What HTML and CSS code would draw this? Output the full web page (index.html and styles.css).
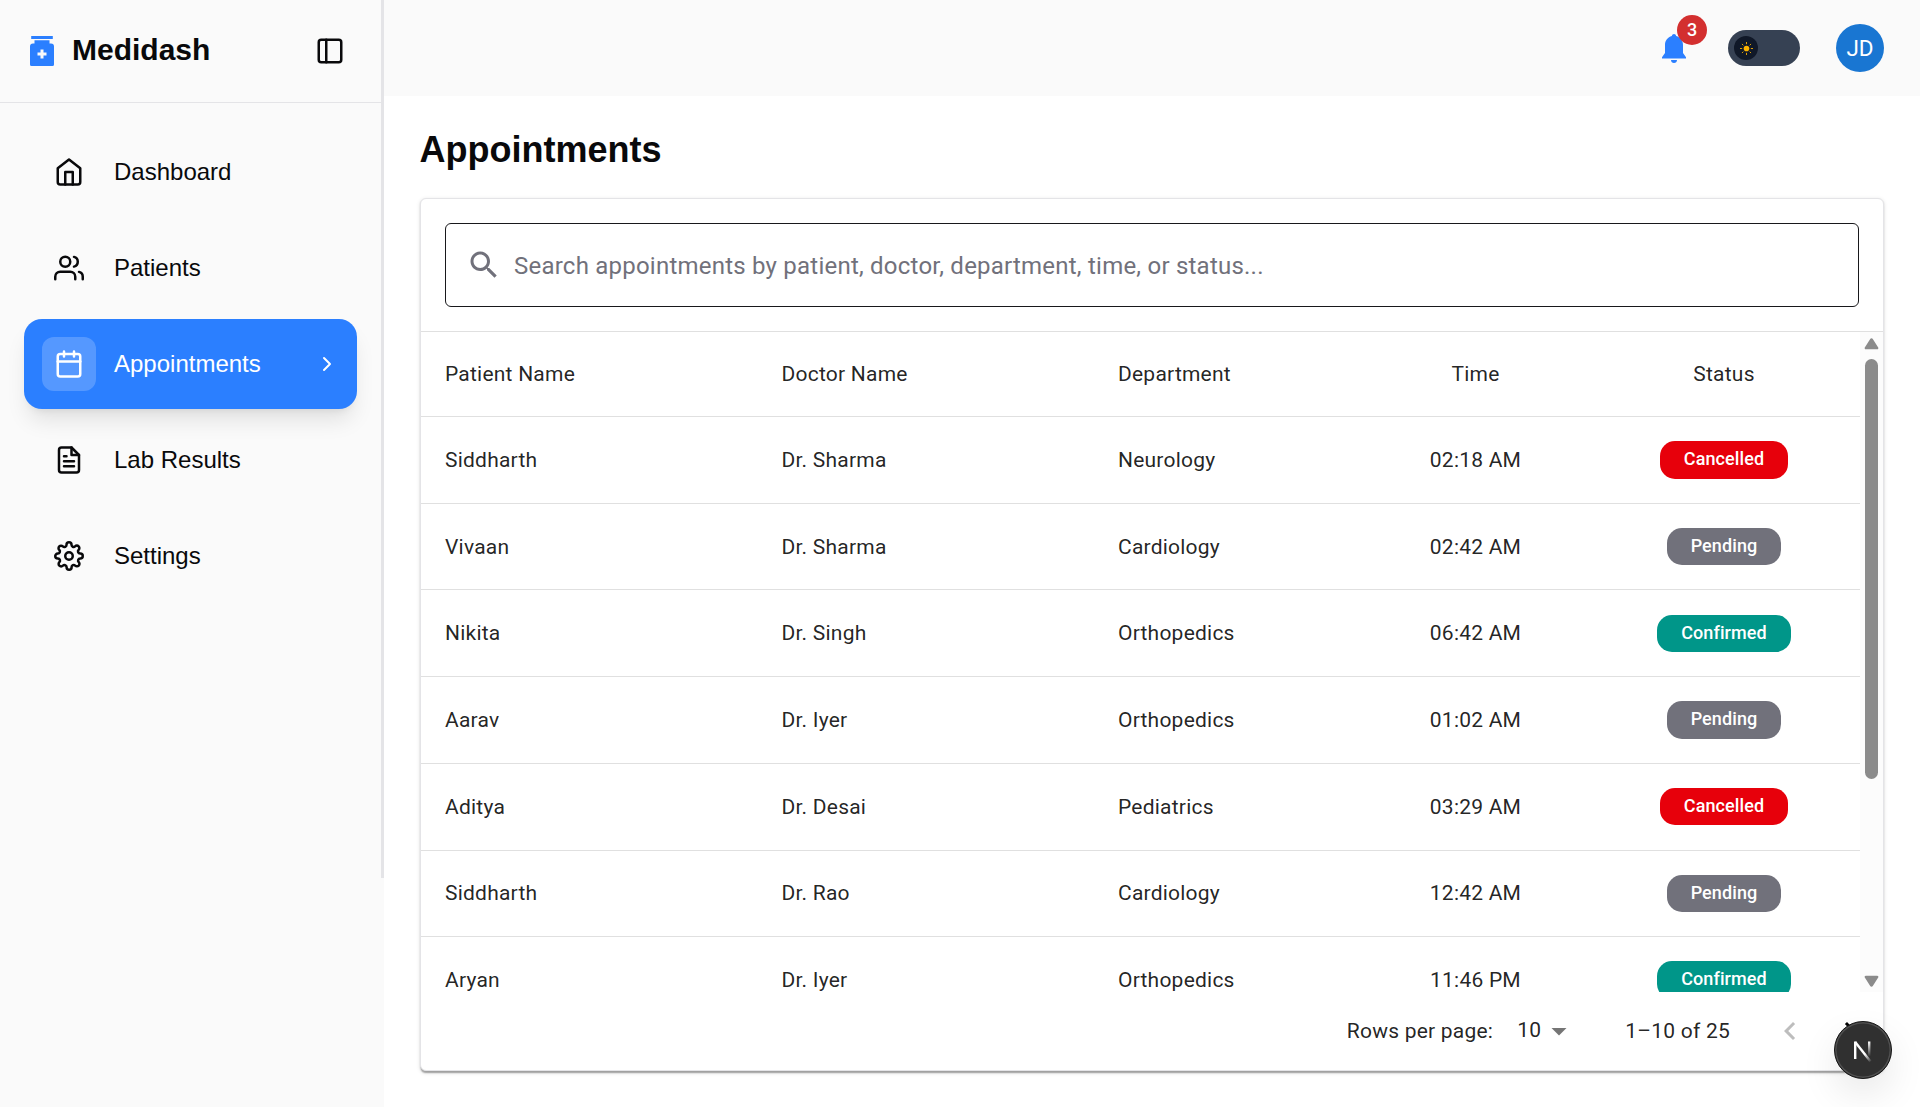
FILE: index.html
```html
<!DOCTYPE html>
<html lang="en">
<head>
<meta charset="utf-8">
<title>Medidash</title>
<link rel="stylesheet" href="styles.css">
</head>
<body>
<div class="app">
  <div class="side-rail">
    <aside class="sidebar">
      <div class="brand">
        <svg class="brand-icon" viewBox="0 0 24 30"><path fill="#2b7fff" d="M1.200 0h21.600v3H1.200zM4.500 4.200h15v3.300H21a3 3 0 0 1 3 3V28.500a1.500 1.500 0 0 1-1.500 1.500h-21A1.500 1.500 0 0 1 0 28.500V10.500a3 3 0 0 1 3-3h1.500z"/><path fill="#fafafa" d="M10.500 13.500h3v3h3v3h-3v3h-3v-3h-3v-3h3z"/></svg>
        <span class="brand-name">Medidash</span>
        <svg class="line-icon" viewBox="0 0 24 24"><rect width="18" height="18" x="3" y="3" rx="2"/><path d="M9 3v18"/></svg>
      </div>
      <nav class="nav">
        <a class="nav-item"><span class="nav-icon"><svg class="line-icon" viewBox="0 0 24 24"><path d="M3 9l9-7 9 7v11a2 2 0 0 1-2 2H5a2 2 0 0 1-2-2z"/><path d="M9 22V12h6v10"/></svg></span>Dashboard</a>
        <a class="nav-item"><span class="nav-icon"><svg class="line-icon" viewBox="0 0 24 24"><path d="M17 21v-2a4 4 0 0 0-4-4H5a4 4 0 0 0-4 4v2"/><circle cx="9" cy="7" r="4"/><path d="M23 21v-2a4 4 0 0 0-3-3.870"/><path d="M16 3.130a4 4 0 0 1 0 7.750"/></svg></span>Patients</a>
        <a class="nav-item active"><span class="nav-icon"><svg class="line-icon" viewBox="0 0 24 24"><path d="M8 2v4M16 2v4"/><rect width="18" height="18" x="3" y="4" rx="2"/><path d="M3 10h18"/></svg></span>Appointments<svg class="line-icon chevron" viewBox="0 0 24 24"><path d="m9 18 6-6-6-6"/></svg></a>
        <a class="nav-item"><span class="nav-icon"><svg class="line-icon" viewBox="0 0 24 24"><path d="M14 2H6a2 2 0 0 0-2 2v16a2 2 0 0 0 2 2h12a2 2 0 0 0 2-2V8z"/><path d="M14 2v6h6M16 13H8M16 17H8M10 9H8"/></svg></span>Lab Results</a>
        <a class="nav-item"><span class="nav-icon"><svg class="line-icon" viewBox="0 0 24 24"><circle cx="12" cy="12" r="3"/><path d="M19.400 15a1.650 1.650 0 0 0 .33 1.820l.06.06a2 2 0 0 1 0 2.830 2 2 0 0 1-2.830 0l-.06-.06a1.650 1.650 0 0 0-1.820-.33 1.650 1.650 0 0 0-1 1.510V21a2 2 0 0 1-2 2 2 2 0 0 1-2-2v-.09A1.650 1.650 0 0 0 9 19.400a1.650 1.650 0 0 0-1.820.33l-.06.06a2 2 0 0 1-2.830 0 2 2 0 0 1 0-2.830l.06-.06a1.650 1.650 0 0 0 .33-1.820 1.650 1.650 0 0 0-1.510-1H3a2 2 0 0 1-2-2 2 2 0 0 1 2-2h.09A1.650 1.650 0 0 0 4.600 9a1.650 1.650 0 0 0-.33-1.820l-.06-.06a2 2 0 0 1 0-2.830 2 2 0 0 1 2.830 0l.06.06a1.650 1.650 0 0 0 1.820.33H9a1.650 1.650 0 0 0 1-1.510V3a2 2 0 0 1 2-2 2 2 0 0 1 2 2v.09a1.650 1.650 0 0 0 1 1.510 1.650 1.650 0 0 0 1.820-.33l.06-.06a2 2 0 0 1 2.830 0 2 2 0 0 1 0 2.830l-.06.06a1.650 1.650 0 0 0-.33 1.820V9a1.650 1.650 0 0 0 1.510 1H21a2 2 0 0 1 2 2 2 2 0 0 1-2 2h-.09a1.650 1.650 0 0 0-1.510 1z"/></svg></span>Settings</a>
      </nav>
    </aside>
  </div>
  <div class="content">
    <header class="topbar">
      <div class="bell">
        <svg viewBox="0 0 24 29"><path fill="#2b7fff" d="M12 0c1.100 0 2 .8 2.200 1.900C18.200 3 21 6.500 21 10.700V19l3 4.200v1.300H0v-1.300L3 19v-8.300C3 6.500 5.800 3 9.800 1.900 10 .8 10.900 0 12 0zM9 26h6c0 1.700-1.300 3-3 3s-3-1.300-3-3z"/></svg>
        <span class="badge">3</span>
      </div>
      <div class="toggle"><span class="knob"><svg viewBox="0 0 12 12"><circle cx="6" cy="6" r="2.600" fill="#fdb400"/><path stroke="#fdb400" stroke-width=".8" d="M6 0v2M6 10v2M0 6h2M10 6h2M1.800 1.800l1.300 1.300M8.900 8.900l1.300 1.300M1.800 10.200l1.300-1.300M8.900 3.100l1.300-1.300"/></svg></span></div>
      <div class="avatar">JD</div>
    </header>
    <main class="main">
      <h1 class="title">Appointments</h1>
      <section class="card">
        <div class="search-wrap">
          <div class="search"><svg viewBox="0 0 24 24"><path d="M15.500 14h-.79l-.28-.27C15.410 12.590 16 11.110 16 9.500 16 5.910 13.090 3 9.500 3S3 5.910 3 9.500 5.910 16 9.500 16c1.610 0 3.090-.59 4.230-1.570l.27.28v.79l5 4.990L20.490 19zm-6 0C7.010 14 5 11.990 5 9.500S7.010 5 9.500 5 14 7.010 14 9.500 11.990 14 9.500 14"/></svg><span>Search appointments by patient, doctor, department, time, or status...</span></div>
        </div>
        <div class="table-area">
          <div class="table">
            <div class="row head"><span>Patient Name</span><span>Doctor Name</span><span>Department</span><span class="mid">Time</span><span class="mid">Status</span></div>
            <div class="row"><span>Siddharth</span><span>Dr. Sharma</span><span>Neurology</span><span class="mid">02:18 AM</span><span class="mid"><b class="pill cancelled">Cancelled</b></span></div>
            <div class="row"><span>Vivaan</span><span>Dr. Sharma</span><span>Cardiology</span><span class="mid">02:42 AM</span><span class="mid"><b class="pill pending">Pending</b></span></div>
            <div class="row"><span>Nikita</span><span>Dr. Singh</span><span>Orthopedics</span><span class="mid">06:42 AM</span><span class="mid"><b class="pill confirmed">Confirmed</b></span></div>
            <div class="row"><span>Aarav</span><span>Dr. Iyer</span><span>Orthopedics</span><span class="mid">01:02 AM</span><span class="mid"><b class="pill pending">Pending</b></span></div>
            <div class="row"><span>Aditya</span><span>Dr. Desai</span><span>Pediatrics</span><span class="mid">03:29 AM</span><span class="mid"><b class="pill cancelled">Cancelled</b></span></div>
            <div class="row"><span>Siddharth</span><span>Dr. Rao</span><span>Cardiology</span><span class="mid">12:42 AM</span><span class="mid"><b class="pill pending">Pending</b></span></div>
            <div class="row"><span>Aryan</span><span>Dr. Iyer</span><span>Orthopedics</span><span class="mid">11:46 PM</span><span class="mid"><b class="pill confirmed">Confirmed</b></span></div>
          </div>
          <div class="scrollbar">
            <svg viewBox="0 0 15 12"><path d="M6.200 1.100a1.500 1.500 0 0 1 2.600 0l5.400 8.400a1.200 1.200 0 0 1-1 1.800H1.800a1.200 1.200 0 0 1-1-1.800z"/></svg>
            <div class="thumb"></div>
            <svg class="down" viewBox="0 0 15 12"><path d="M6.200 1.100a1.500 1.500 0 0 1 2.600 0l5.400 8.400a1.200 1.200 0 0 1-1 1.800H1.800a1.200 1.200 0 0 1-1-1.800z"/></svg>
          </div>
        </div>
        <footer class="pager">
          <span class="rows-label">Rows per page:</span>
          <span class="rows-value">10</span>
          <svg class="caret" viewBox="0 0 24 24"><path d="m7 10 5 5 5-5z"/></svg>
          <span class="range">1–10 of 25</span>
          <svg class="prev" viewBox="0 0 24 24"><path d="M15.410 16.590 10.830 12l4.580-4.590L14 6l-6 6 6 6z"/></svg>
          <svg class="next" viewBox="0 0 24 24"><path d="M8.590 16.590 13.170 12 8.590 7.410 10 6l6 6-6 6z"/></svg>
        </footer>
      </section>
    </main>
  </div>
  <div class="dev-button">
    <svg viewBox="0 0 40 40"><defs><linearGradient id="stem" x1="0" y1="0" x2="0" y2="1"><stop offset="0" stop-color="#fff"/><stop offset="1" stop-color="#fff" stop-opacity="0"/></linearGradient><linearGradient id="slash" gradientUnits="userSpaceOnUse" x1="22" y1="24" x2="28" y2="32"><stop offset="0" stop-color="#fff"/><stop offset="1" stop-color="#fff" stop-opacity="0"/></linearGradient></defs><path fill="#fff" d="M11 11.500h2.400v17.500H11z"/><path fill="none" stroke="url(#slash)" stroke-width="2.400" d="M12.200 12 27.500 31.500"/><rect x="25" y="11.500" width="2.400" height="15" fill="url(#stem)"/></svg>
  </div>
</div>
</body>
</html>
```
FILE: styles.css
```css
* { box-sizing: border-box; }
body { margin: 0; background: #fff; color: #09090b; font-family: "Liberation Sans", Arial, sans-serif; }
svg { display: block; flex: none; }
.app { display: flex; height: 1107px; overflow: hidden; }
.side-rail { width: 384px; flex: none; background: #fafafa; }
.sidebar { height: 878px; border-right: 3px solid #e4e4e7; }
.brand { display: flex; align-items: center; height: 103px; padding: 0 36px 0 30px; border-bottom: 1px solid #e4e4e7; }
.brand-icon { width: 24px; height: 30px; }
.brand-name { flex: 1; margin: 0 0 2px 18px; font-size: 30px; font-weight: 700; line-height: 42px; }
.line-icon { width: 30px; height: 30px; fill: none; stroke: currentColor; stroke-width: 2; stroke-linecap: round; stroke-linejoin: round; }
.nav { display: flex; flex-direction: column; gap: 6px; padding: 24px; }
.nav-item { display: flex; align-items: center; height: 90px; padding: 0 18px; border-radius: 18px; font-size: 24px; }
.nav-icon { display: flex; align-items: center; justify-content: center; width: 54px; height: 54px; margin-right: 18px; border-radius: 12px; }
.active { background: #2b7fff; color: #fff; box-shadow: 0 15px 22px -4px rgba(0, 0, 0, .1), 0 6px 9px -6px rgba(0, 0, 0, .1); }
.active .nav-icon { background: rgba(255, 255, 255, .2); }
.chevron { width: 24px; height: 24px; margin-left: auto; }

.content { flex: 1; font-family: Roboto, sans-serif; }
.topbar { display: flex; align-items: center; justify-content: flex-end; height: 96px; padding-right: 36px; background: #fafafa; }
.bell { position: relative; width: 24px; height: 29px; margin-right: 42px; }
.badge { position: absolute; left: 15px; top: -19px; width: 30px; height: 30px; border-radius: 50%; background: #d32f2f; color: #fff; font-size: 18px; font-weight: 500; line-height: 30px; text-align: center; }
.toggle { display: flex; align-items: center; width: 72px; height: 36px; padding: 6px; margin-right: 36px; border-radius: 18px; background: #364153; }
.knob { display: flex; align-items: center; justify-content: center; width: 24px; height: 24px; border-radius: 50%; background: #101828; }
.knob svg { width: 13px; height: 13px; }
.avatar { width: 48px; height: 48px; border-radius: 50%; background: #1976d2; color: #fff; font-size: 22.5px; line-height: 49px; text-align: center; }

.main { padding: 30px 36px 0; }
.title { margin: 0 0 24px -.5px; font: 700 36px/48px "Liberation Sans", Arial, sans-serif; }
.card { height: 873px; border: 1px solid #e4e4e7; border-radius: 6px; background: #fff; box-shadow: 0 3px 1.5px -1.5px rgba(0, 0, 0, .2), 0 1.5px 1.5px rgba(0, 0, 0, .14), 0 1.5px 4.5px rgba(0, 0, 0, .12); color: rgba(0, 0, 0, .87); }
.search-wrap { height: 133px; padding: 24px; border-bottom: 1px solid #e0e0e0; }
.search { display: flex; align-items: center; height: 84px; padding: 0 20px; border: 1px solid #18181b; border-radius: 6px; color: #71717b; font-size: 24px; letter-spacing: .225px; }
.search svg { width: 36px; height: 36px; margin-right: 12px; fill: #71717b; }
.search span { padding-top: 2px; }
.table-area { display: flex; height: 660px; }
.table { flex: 1; overflow: hidden; font-size: 21px; letter-spacing: .225px; }
.row { display: grid; grid-template-columns: 336.5px 336.5px 269px 225px 272px; align-items: center; height: 86.72px; border-bottom: 1px solid #e0e0e0; }
.row > span { padding: 0 24px; }
.row > .mid { padding: 0; text-align: center; }
.head { height: 85px; }
.pill { display: inline-block; height: 37.5px; padding: 0 24px; border-radius: 15px; color: #fff; font-size: 18px; font-weight: 500; line-height: 36px; letter-spacing: .1px; vertical-align: middle; }
.cancelled { background: #e7000b; }
.pending { background: #71717b; }
.confirmed { background: #009689; }
.scrollbar { display: flex; flex-direction: column; align-items: center; width: 23px; padding: 6px 0 5px; background: #fcfcfc; }
.scrollbar svg { width: 15px; height: 12px; fill: #8b8b8b; }
.thumb { width: 13px; height: 420px; margin-top: 9px; border-radius: 7px; background: #8b8b8b; }
.scrollbar .down { margin-top: auto; transform: rotate(180deg); }
.pager { display: flex; align-items: center; justify-content: flex-end; height: 78px; padding-right: 15px; font-size: 21px; letter-spacing: .225px; }
.rows-value { margin: 0 0 2px 24px; }
.caret { width: 36px; height: 36px; fill: rgba(0, 0, 0, .54); }
.range { margin-left: 48px; }
.prev, .next { width: 36px; height: 36px; }
.prev { margin-left: 42px; fill: rgba(0, 0, 0, .26); }
.next { margin-left: 24px; }
.dev-button { position: absolute; left: 1834px; top: 1021px; width: 58px; height: 58px; padding: 8px; border: 1px solid #171717; border-radius: 50%; background: #303030; box-shadow: inset 0 0 0 1.5px #505050, 0 16px 40px -4px rgba(0, 0, 0, .12); }
```
